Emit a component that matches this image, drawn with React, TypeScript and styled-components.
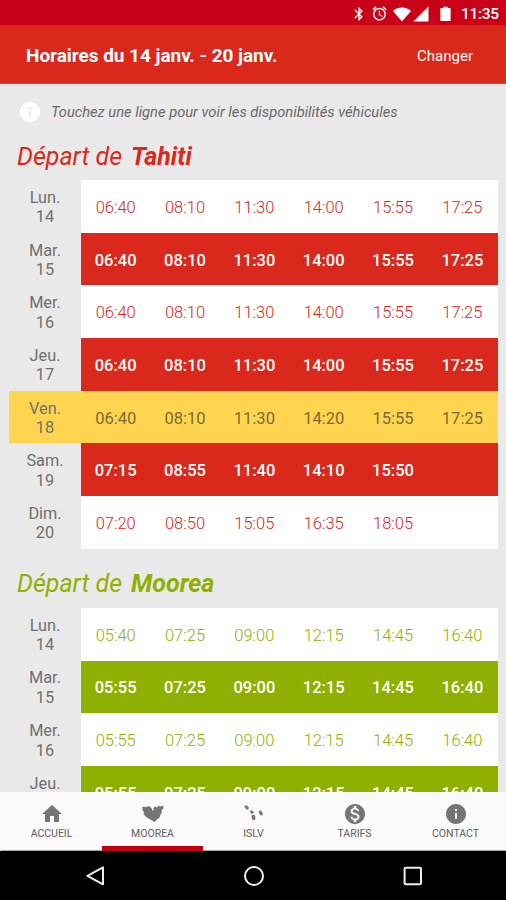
import React from "react";
import styled, { createGlobalStyle } from "styled-components";
import {
  MdAlarm,
  MdBatteryFull,
  MdBluetooth,
  MdHome,
  MdInfo,
  MdMonetizationOn,
  MdSignalCellular4Bar,
} from "react-icons/md";

const RED = "#da281c";
const GREEN = "#8fb000";

const GlobalStyle = createGlobalStyle`
  * { box-sizing: border-box; }
  body { margin: 0; background: #e9e9e9; font-family: Roboto, "Liberation Sans", sans-serif; }
`;

const Screen = styled.div`
  width: 506px;
  height: 900px;
  display: flex;
  flex-direction: column;
  overflow: hidden;
  background: #e9e9e9;
`;

const StatusBar = styled.div`
  height: 25px;
  flex: none;
  display: flex;
  align-items: center;
  justify-content: flex-end;
  padding: 2px 7px 0 0;
  background: #c80018;
  color: #fff;
  svg { display: block; flex: none; }
`;

const StatusIcon = styled.span<{ $gap: number }>`
  display: flex;
  margin-right: ${(p) => p.$gap}px;
`;

const Clock = styled.span`
  width: 38px;
  font-size: 15.5px;
  font-weight: 500;
  line-height: 20px;
  white-space: nowrap;
  letter-spacing: -0.3px;
`;

const Header = styled.header`
  height: 59px;
  flex: none;
  display: flex;
  align-items: center;
  justify-content: space-between;
  padding: 3px 33px 0 26px;
  background: ${RED};
  border-bottom: 1px solid #e2473d;
  color: #fff;
`;

const HeaderTitle = styled.h1`
  margin: 0;
  font-size: 19px;
  font-weight: 700;
  letter-spacing: -0.04px;
  white-space: nowrap;
`;

const HeaderAction = styled.button`
  border: 0;
  padding: 0;
  background: none;
  color: #fff;
  font: 400 15px Roboto, sans-serif;
`;

const Content = styled.main`
  flex: 1;
  min-height: 0;
  overflow: hidden;
`;

const Hint = styled.div`
  height: 55px;
  display: flex;
  align-items: center;
  gap: 9px;
  padding-left: 18px;
  color: #6a6a6a;
  font-size: 14.7px;
  font-style: italic;
  white-space: nowrap;
  svg { color: #fff; flex: none; }
`;

const HintDisc = styled.span`
  display: flex;
  align-items: center;
  justify-content: center;
  width: 24px;
  height: 24px;
`;

const Heading = styled.h2<{ $color: string; $gap: number }>`
  height: 41px;
  margin: ${(p) => p.$gap}px 0 0;
  padding: 0 0 7px 17px;
  display: flex;
  align-items: center;
  gap: 9px;
  font-size: 25px;
  font-weight: 400;
  font-style: italic;
  white-space: nowrap;
  color: ${(p) => p.$color};
  b { font-weight: 700; }
`;

const Row = styled.div<{ $today?: boolean }>`
  display: grid;
  grid-template-columns: 72px repeat(6, 69.5px);
  width: 489px;
  height: 52.7px;
  margin-left: 9px;
  background: ${(p) => (p.$today ? "#ffd54f" : "transparent")};
`;

const Day = styled.div`
  display: flex;
  flex-direction: column;
  align-items: center;
  justify-content: center;
  padding-top: 2px;
  font-size: 16.3px;
  line-height: 19.5px;
  color: #707070;
`;

type Tone = "plain" | "filled" | "today";

const Times = styled.div<{ $tone: Tone; $color: string }>`
  grid-column: 2 / -1;
  display: grid;
  grid-template-columns: repeat(6, 69.35px);
  align-items: center;
  justify-items: center;
  padding-top: 2px;
  font-size: 16.5px;
  font-weight: ${(p) => (p.$tone === "filled" ? 500 : p.$tone === "plain" ? 300 : 400)};
  background: ${(p) =>
    p.$tone === "filled" ? p.$color : p.$tone === "plain" ? "#fff" : "transparent"};
  color: ${(p) =>
    p.$tone === "filled" ? "#fff" : p.$tone === "plain" ? p.$color : "#7b6a35"};
`;

const Tabs = styled.nav`
  height: 59px;
  flex: none;
  display: grid;
  grid-template-columns: repeat(5, 1fr);
  padding-left: 1px;
  background: #fafafa;
`;

const Tab = styled.div<{ $active?: boolean }>`
  display: flex;
  flex-direction: column;
  align-items: center;
  padding-top: 10px;
  border-bottom: ${(p) => (p.$active ? "5px solid #c00010" : "1px solid #a5a5a5")};
  color: #757575;
  svg { display: block; flex: none; }
`;

const TabLabel = styled.span`
  margin-top: 1px;
  font-size: 10.5px;
  line-height: 14px;
  color: #606060;
`;

const SystemBar = styled.div`
  height: 49px;
  flex: none;
  display: flex;
  align-items: center;
  justify-content: center;
  gap: 135px;
  padding-left: 2px;
  background: #000;
`;

const WifiIcon = () => (
  <svg width="20" height="16" viewBox="0 0 20 16" fill="currentColor">
    <path d="M10 15.6 1 5C3.2 2.8 6.4 1.4 10 1.4S16.8 2.8 19 5Z" />
  </svg>
);

const BatteryIcon = () => (
  <svg width="17" height="17" viewBox="0 0 17 17" fill="currentColor">
    <path d="M3.4 3h3V1.8h4.2V3h3v13H3.4Z" />
  </svg>
);

const IslandIcon = () => (
  <svg width="24" height="24" viewBox="0 0 24 24" fill="currentColor">
    <path d="M1.2 5.2 3 4.5 5 5.2 6.7 4.2 9 4.5 10.6 6.5 11.7 8.7 12.9 8 12.4 6.1 14.1 4.6 16 5.4 17.2 3.7 19.4 4.5 22.6 3.8 22.4 6.5 20.7 8.2 20.7 10.8 19.3 12.9 18.6 15.6 15.8 17.5 14 19.9 11.7 19 8.9 17.2 6.2 15.8 4.1 14.1 2.5 12.1 3.2 10.6 1.7 8.5Z" />
  </svg>
);

const ArchipelagoIcon = () => (
  <svg width="24" height="24" viewBox="0 0 24 24" fill="currentColor">
    <path d="M2.2 4 4.8 3.2 6.6 5.2 6.5 7.6 4.1 7.4Z" />
    <path d="M7.8 9 10 8.3 11.6 9.8 11.2 11.7 8.9 11.5Z" />
    <path d="M9.3 13.5 12.2 12.6 13.4 15 13.1 18 10.3 17.7Z" />
    <path d="M16.5 8.9 18.7 8.4 20.7 11.1 20.6 13.5 18 13.1Z" />
  </svg>
);

const BackIcon = () => (
  <svg width="24" height="24" viewBox="0 0 24 24" fill="none" stroke="#eee" strokeWidth="2">
    <path d="M20 3.3v17L4.4 11.8Z" strokeLinejoin="round" />
  </svg>
);

const CircleIcon = () => (
  <svg width="24" height="24" viewBox="0 0 24 24" fill="none" stroke="#eee" strokeWidth="2">
    <circle cx="12" cy="12" r="9" />
  </svg>
);

const SquareIcon = () => (
  <svg width="24" height="24" viewBox="0 0 24 24" fill="none" stroke="#eee" strokeWidth="2">
    <rect x="3.6" y="3.8" width="16.4" height="16.4" rx="1" />
  </svg>
);

interface Departure {
  day: string;
  date: number;
  times: string[];
  tone: Tone;
}

const TAHITI: Departure[] = [
  { day: "Lun.", date: 14, tone: "plain", times: ["06:40", "08:10", "11:30", "14:00", "15:55", "17:25"] },
  { day: "Mar.", date: 15, tone: "filled", times: ["06:40", "08:10", "11:30", "14:00", "15:55", "17:25"] },
  { day: "Mer.", date: 16, tone: "plain", times: ["06:40", "08:10", "11:30", "14:00", "15:55", "17:25"] },
  { day: "Jeu.", date: 17, tone: "filled", times: ["06:40", "08:10", "11:30", "14:00", "15:55", "17:25"] },
  { day: "Ven.", date: 18, tone: "today", times: ["06:40", "08:10", "11:30", "14:20", "15:55", "17:25"] },
  { day: "Sam.", date: 19, tone: "filled", times: ["07:15", "08:55", "11:40", "14:10", "15:50"] },
  { day: "Dim.", date: 20, tone: "plain", times: ["07:20", "08:50", "15:05", "16:35", "18:05"] },
];

const MOOREA: Departure[] = [
  { day: "Lun.", date: 14, tone: "plain", times: ["05:40", "07:25", "09:00", "12:15", "14:45", "16:40"] },
  { day: "Mar.", date: 15, tone: "filled", times: ["05:55", "07:25", "09:00", "12:15", "14:45", "16:40"] },
  { day: "Mer.", date: 16, tone: "plain", times: ["05:55", "07:25", "09:00", "12:15", "14:45", "16:40"] },
  { day: "Jeu.", date: 17, tone: "filled", times: ["05:55", "07:25", "09:00", "12:15", "14:45", "16:40"] },
];

const Schedule = ({ rows, color }: { rows: Departure[]; color: string }) => (
  <section>
    {rows.map((r) => (
      <Row key={r.date} $today={r.tone === "today"}>
        <Day>
          <span>{r.day}</span>
          <span>{r.date}</span>
        </Day>
        <Times $tone={r.tone} $color={color}>
          {r.times.map((t) => (
            <span key={t}>{t}</span>
          ))}
        </Times>
      </Row>
    ))}
  </section>
);

export default function App() {
  return (
    <>
      <GlobalStyle />
      <Screen>
        <StatusBar>
          <StatusIcon $gap={4}><MdBluetooth size={16} /></StatusIcon>
          <StatusIcon $gap={4}><MdAlarm size={17} /></StatusIcon>
          <StatusIcon $gap={0}><WifiIcon /></StatusIcon>
          <StatusIcon $gap={7}><MdSignalCellular4Bar size={18} /></StatusIcon>
          <StatusIcon $gap={7}><BatteryIcon /></StatusIcon>
          <Clock>11:35</Clock>
        </StatusBar>
        <Header>
          <HeaderTitle>Horaires du 14 janv. - 20 janv.</HeaderTitle>
          <HeaderAction>Changer</HeaderAction>
        </Header>
        <Content>
          <Hint>
            <HintDisc><MdInfo size={24} /></HintDisc>
            <span>Touchez une ligne pour voir les disponibilités véhicules</span>
          </Hint>
          <Heading $color={RED} $gap={0}>
            <span>Départ de</span>
            <b>Tahiti</b>
          </Heading>
          <Schedule rows={TAHITI} color={RED} />
          <Heading $color={GREEN} $gap={18}>
            <span>Départ de</span>
            <b>Moorea</b>
          </Heading>
          <Schedule rows={MOOREA} color={GREEN} />
        </Content>
        <Tabs>
          <Tab><MdHome size={24} /><TabLabel>ACCUEIL</TabLabel></Tab>
          <Tab $active><IslandIcon /><TabLabel>MOOREA</TabLabel></Tab>
          <Tab><ArchipelagoIcon /><TabLabel>ISLV</TabLabel></Tab>
          <Tab><MdMonetizationOn size={24} /><TabLabel>TARIFS</TabLabel></Tab>
          <Tab><MdInfo size={24} /><TabLabel>CONTACT</TabLabel></Tab>
        </Tabs>
        <SystemBar>
          <BackIcon />
          <CircleIcon />
          <SquareIcon />
        </SystemBar>
      </Screen>
    </>
  );
}
